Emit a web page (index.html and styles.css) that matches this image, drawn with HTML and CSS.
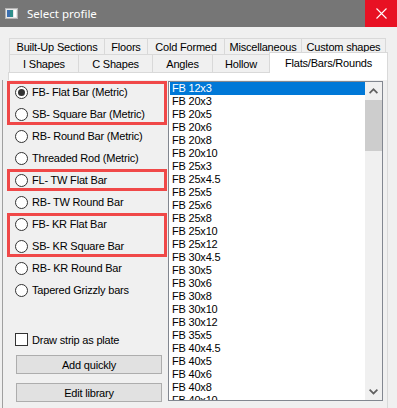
FILE: index.html
```html
<!DOCTYPE html>
<html lang="en">
<head>
    <meta charset="UTF-8">
    <meta name="viewport" content="width=device-width, initial-scale=1.0">
    <title>Select profile</title>
    <link rel="stylesheet" href="styles.css">
</head>
<body>
    <div class="window">
        <div class="titlebar">
            <svg class="app-icon" width="13" height="11" viewBox="0 0 13 11">
                <rect x="0.5" y="0.5" width="12" height="10" fill="#e8e8e8" stroke="#b4b4b4"/>
                <rect x="2" y="2" width="6" height="7" fill="#2f8f8a"/>
                <rect x="2" y="2" width="3" height="7" fill="#3b6fb0"/>
                <rect x="9" y="2" width="2" height="7" fill="#ffffff"/>
            </svg>
            <span class="title">Select profile</span>
            <div class="close">
                <svg width="11" height="11" viewBox="0 0 11 11">
                    <path d="M0.5 0.5L10.5 10.5M10.5 0.5L0.5 10.5" stroke="#ffffff" stroke-width="1.1"/>
                </svg>
            </div>
        </div>

        <div class="client">
            <div class="tab-row row-top">
                <div class="tab tab-builtup">Built-Up Sections</div>
                <div class="tab tab-floors">Floors</div>
                <div class="tab tab-cold">Cold Formed</div>
                <div class="tab tab-misc">Miscellaneous</div>
                <div class="tab tab-custom">Custom shapes</div>
            </div>
            <div class="tab-row row-bottom">
                <div class="tab tab-ishapes">I Shapes</div>
                <div class="tab tab-cshapes">C Shapes</div>
                <div class="tab tab-angles">Angles</div>
                <div class="tab tab-hollow">Hollow</div>
                <div class="tab tab-flats selected">Flats/Bars/Rounds</div>
            </div>

            <div class="page">
                <div class="inner">
                    <div class="left">
                        <div class="group">
                            <div class="radio-row"><span class="radio checked"></span>FB- Flat Bar (Metric)</div>
                            <div class="radio-row"><span class="radio"></span>SB- Square Bar (Metric)</div>
                        </div>
                        <div class="radio-row"><span class="radio"></span>RB- Round Bar (Metric)</div>
                        <div class="radio-row"><span class="radio"></span>Threaded Rod (Metric)</div>
                        <div class="group">
                            <div class="radio-row"><span class="radio"></span>FL- TW Flat Bar</div>
                        </div>
                        <div class="radio-row"><span class="radio"></span>RB- TW Round Bar</div>
                        <div class="group">
                            <div class="radio-row"><span class="radio"></span>FB- KR Flat Bar</div>
                            <div class="radio-row"><span class="radio"></span>SB- KR Square Bar</div>
                        </div>
                        <div class="radio-row"><span class="radio"></span>RB- KR Round Bar</div>
                        <div class="radio-row"><span class="radio"></span>Tapered Grizzly bars</div>

                        <div class="check-row"><span class="check"></span>Draw strip as plate</div>
                        <div class="button">Add quickly</div>
                        <div class="button">Edit library</div>
                    </div>

                    <div class="list">
                        <div class="items">
                            <div class="item selected">FB 12x3</div>
                            <div class="item">FB 20x3</div>
                            <div class="item">FB 20x5</div>
                            <div class="item">FB 20x6</div>
                            <div class="item">FB 20x8</div>
                            <div class="item">FB 20x10</div>
                            <div class="item">FB 25x3</div>
                            <div class="item">FB 25x4.5</div>
                            <div class="item">FB 25x5</div>
                            <div class="item">FB 25x6</div>
                            <div class="item">FB 25x8</div>
                            <div class="item">FB 25x10</div>
                            <div class="item">FB 25x12</div>
                            <div class="item">FB 30x4.5</div>
                            <div class="item">FB 30x5</div>
                            <div class="item">FB 30x6</div>
                            <div class="item">FB 30x8</div>
                            <div class="item">FB 30x10</div>
                            <div class="item">FB 30x12</div>
                            <div class="item">FB 35x5</div>
                            <div class="item">FB 40x4.5</div>
                            <div class="item">FB 40x5</div>
                            <div class="item">FB 40x6</div>
                            <div class="item">FB 40x8</div>
                            <div class="item">FB 40x10</div>
                        </div>
                        <div class="scrollbar">
                            <div class="sb-button sb-up">
                                <svg width="9" height="6" viewBox="0 0 9 6"><path d="M0 4.5L4.5 0L9 4.5L7.8 5.7L4.5 2.4L1.2 5.7Z" fill="#606060"/></svg>
                            </div>
                            <div class="thumb"></div>
                            <div class="sb-button sb-down">
                                <svg width="9" height="6" viewBox="0 0 9 6"><path d="M0 1.2L1.2 0L4.5 3.3L7.8 0L9 1.2L4.5 5.7Z" fill="#606060"/></svg>
                            </div>
                        </div>
                    </div>
                </div>
            </div>
        </div>
    </div>
</body>
</html>
```

FILE: styles.css
```css
body {
    margin: 0;
    padding: 0;
    background-color: #f0f0f0;
    font-family: "Liberation Sans", Arial, sans-serif;
    font-size: 11px;
    letter-spacing: -0.2px;
    color: #000000;
}

.window {
    width: 397px;
    height: 408px;
    overflow: hidden;
    background-color: #f0f0f0;
}

/* title bar */
.titlebar {
    height: 27px;
    display: flex;
    align-items: center;
    background-color: #767676;
    color: #ffffff;
}

.app-icon {
    margin-left: 5px;
}

.title {
    margin-left: 9px;
    font-family: "Noto Sans", sans-serif;
    font-size: 11.5px;
    letter-spacing: 0;
}

.close {
    margin-left: auto;
    width: 32px;
    height: 27px;
    display: flex;
    align-items: center;
    justify-content: center;
    background-color: #e81123;
}

/* tabs */
.client {
    padding-top: 11px;
}

.tab-row {
    display: flex;
    padding-left: 9px;
}

.row-top {
    height: 16px;
}

.row-bottom {
    height: 18px;
}

.tab {
    box-sizing: border-box;
    height: 100%;
    margin-right: -1px;
    border: 1px solid #d9d9d9;
    border-bottom: none;
    background-color: #f0f0f0;
    display: flex;
    align-items: center;
    justify-content: center;
    white-space: nowrap;
}

.tab.selected {
    position: relative;
    z-index: 1;
    height: 21px;
    margin-top: -2px;
    background-color: #ffffff;
}

.tab-builtup { width: 96px; }
.tab-floors { width: 44px; }
.tab-cold { width: 78px; }
.tab-misc { width: 78px; }
.tab-custom { width: 85px; }
.tab-ishapes { width: 70px; }
.tab-cshapes { width: 75px; }
.tab-angles { width: 61px; }
.tab-hollow { width: 58px; }
.tab-flats { width: 119px; }

/* tab page */
.page {
    box-sizing: border-box;
    width: 380px;
    height: 336px;
    margin-left: 8px;
    padding-top: 7px;
    border: 1px solid #d9d9d9;
    border-bottom: none;
    background-color: #ffffff;
}

.inner {
    display: flex;
    width: 385px;
    height: 100%;
    margin-left: -7px;
    border-left: 1px solid #a0a0a0;
    box-sizing: border-box;
    background-color: #f0f0f0;
}

.left {
    width: 165px;
    flex-shrink: 0;
    padding: 1px 0 0 4px;
    box-sizing: border-box;
}

.group {
    width: 160px;
    outline: 3px solid #f04848;
    outline-offset: -3px;
}

.radio-row {
    width: 160px;
    height: 22px;
    padding-left: 8px;
    box-sizing: border-box;
    display: flex;
    align-items: center;
    gap: 4px;
    white-space: nowrap;
}

.radio {
    width: 13px;
    height: 13px;
    box-sizing: border-box;
    border: 1px solid #333333;
    border-radius: 50%;
    background-color: #ffffff;
    display: flex;
    align-items: center;
    justify-content: center;
    flex-shrink: 0;
}

.radio.checked::after {
    content: "";
    width: 7px;
    height: 7px;
    border-radius: 50%;
    background-color: #333333;
}

.check-row {
    height: 13px;
    margin-top: 32px;
    padding-left: 8px;
    display: flex;
    align-items: center;
    gap: 4px;
}

.check {
    width: 13px;
    height: 13px;
    box-sizing: border-box;
    border: 1px solid #333333;
    background-color: #ffffff;
}

.button {
    width: 146px;
    height: 19px;
    margin: 9px 0 0 9px;
    box-sizing: border-box;
    border: 1px solid #adadad;
    background-color: #e1e1e1;
    display: flex;
    align-items: center;
    justify-content: center;
}

/* list box */
.list {
    width: 215px;
    height: 320px;
    margin-top: 1px;
    flex-shrink: 0;
    box-sizing: border-box;
    border: 1px solid #828790;
    padding-left: 1px;
    background-color: #ffffff;
    display: flex;
    overflow: hidden;
}

.items {
    width: 195px;
    overflow: hidden;
}

.item {
    height: 13px;
    line-height: 13px;
    padding-left: 2px;
    white-space: nowrap;
}

.item.selected {
    background-color: #0078d7;
    color: #ffffff;
}

.scrollbar {
    width: 17px;
    display: flex;
    flex-direction: column;
    background-color: #f0f0f0;
}

.sb-button {
    display: flex;
    align-items: center;
    justify-content: center;
}

.sb-up {
    height: 18px;
}

.sb-down {
    height: 17px;
    margin-top: auto;
}

.thumb {
    height: 51px;
    background-color: #cdcdcd;
}
```
